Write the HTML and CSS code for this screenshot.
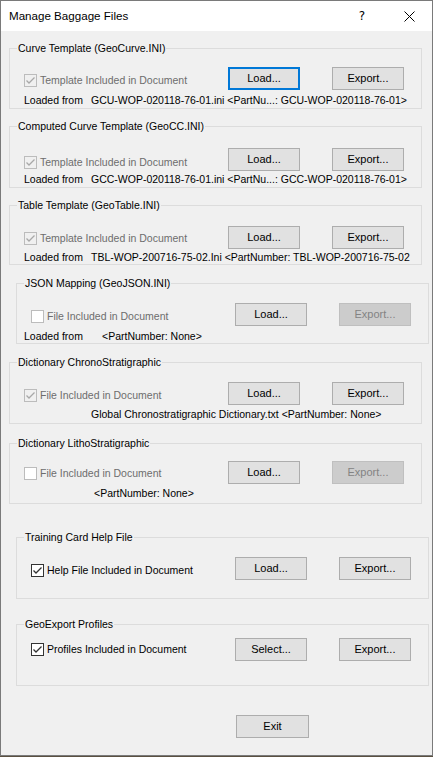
FILE: index.html
```html
<!DOCTYPE html>
<html>
<head>
<meta charset="utf-8">
<link rel="stylesheet" href="styles.css">
</head>
<body>
<div class="window">
  <div class="titlebar">
    <span class="title">Manage Baggage Files</span>
    <span class="tb-btn help">?</span>
    <span class="tb-btn close"><svg width="11" height="11" viewBox="0 0 11 11"><path d="M0.5 0.5 L10.5 10.5 M10.5 0.5 L0.5 10.5" stroke="#000" stroke-width="1" fill="none"/></svg></span>
  </div>

  <fieldset class="group g1">
    <legend>Curve Template (GeoCurve.INI)</legend>
    <div class="inner">
      <div class="row">
        <label class="check disabled"><span class="box checked"><svg viewBox="0 0 13 13"><polyline points="2.5,6.5 5,9 10.5,3.5"/></svg></span><span>Template Included in Document</span></label>
        <button class="btn focus">Load...</button>
        <button class="btn">Export...</button>
      </div>
      <div class="loaded"><span class="lf">Loaded from</span><span>GCU-WOP-020118-76-01.ini &lt;PartNu...: GCU-WOP-020118-76-01&gt;</span></div>
    </div>
  </fieldset>

  <fieldset class="group g2">
    <legend>Computed Curve Template (GeoCC.INI)</legend>
    <div class="inner">
      <div class="row">
        <label class="check disabled"><span class="box checked"><svg viewBox="0 0 13 13"><polyline points="2.5,6.5 5,9 10.5,3.5"/></svg></span><span>Template Included in Document</span></label>
        <button class="btn">Load...</button>
        <button class="btn">Export...</button>
      </div>
      <div class="loaded"><span class="lf">Loaded from</span><span>GCC-WOP-020118-76-01.ini &lt;PartNu...: GCC-WOP-020118-76-01&gt;</span></div>
    </div>
  </fieldset>

  <fieldset class="group g3">
    <legend>Table Template (GeoTable.INI)</legend>
    <div class="inner">
      <div class="row">
        <label class="check disabled"><span class="box checked"><svg viewBox="0 0 13 13"><polyline points="2.5,6.5 5,9 10.5,3.5"/></svg></span><span>Template Included in Document</span></label>
        <button class="btn">Load...</button>
        <button class="btn">Export...</button>
      </div>
      <div class="loaded clip"><span class="lf">Loaded from</span><span>TBL-WOP-200716-75-02.Ini &lt;PartNumber: TBL-WOP-200716-75-02</span></div>
    </div>
  </fieldset>

  <fieldset class="group g4 inset">
    <legend>JSON Mapping (GeoJSON.INI)</legend>
    <div class="inner">
      <div class="row">
        <label class="check disabled"><span class="box"></span><span>File Included in Document</span></label>
        <button class="btn">Load...</button>
        <button class="btn" disabled>Export...</button>
      </div>
      <div class="loaded"><span class="lf">Loaded from</span><span class="v4">&lt;PartNumber: None&gt;</span></div>
    </div>
  </fieldset>

  <fieldset class="group g5">
    <legend>Dictionary ChronoStratigraphic</legend>
    <div class="inner">
      <div class="row">
        <label class="check disabled"><span class="box checked"><svg viewBox="0 0 13 13"><polyline points="2.5,6.5 5,9 10.5,3.5"/></svg></span><span>File Included in Document</span></label>
        <button class="btn">Load...</button>
        <button class="btn">Export...</button>
      </div>
      <div class="loaded"><span class="lf"></span><span>Global Chronostratigraphic Dictionary.txt &lt;PartNumber: None&gt;</span></div>
    </div>
  </fieldset>

  <fieldset class="group g6">
    <legend>Dictionary LithoStratigraphic</legend>
    <div class="inner">
      <div class="row">
        <label class="check disabled"><span class="box"></span><span>File Included in Document</span></label>
        <button class="btn">Load...</button>
        <button class="btn" disabled>Export...</button>
      </div>
      <div class="loaded"><span class="lf"></span><span class="v6">&lt;PartNumber: None&gt;</span></div>
    </div>
  </fieldset>

  <fieldset class="group g7 inset">
    <legend>Training Card Help File</legend>
    <div class="inner">
      <div class="row">
        <label class="check"><span class="box checked"><svg viewBox="0 0 13 13"><polyline points="2.5,6.5 5,9 10.5,3.5"/></svg></span><span>Help File Included in Document</span></label>
        <button class="btn">Load...</button>
        <button class="btn">Export...</button>
      </div>
    </div>
  </fieldset>

  <fieldset class="group g8 inset">
    <legend>GeoExport Profiles</legend>
    <div class="inner">
      <div class="row">
        <label class="check"><span class="box checked"><svg viewBox="0 0 13 13"><polyline points="2.5,6.5 5,9 10.5,3.5"/></svg></span><span>Profiles Included in Document</span></label>
        <button class="btn">Select...</button>
        <button class="btn">Export...</button>
      </div>
    </div>
  </fieldset>

  <div class="footer">
    <button class="btn exit">Exit</button>
  </div>
</div>
</body>
</html>
```

FILE: styles.css
```css
html, body {
  margin: 0;
  padding: 0;
  background: #5a5040;
}

.window {
  width: 433px;
  height: 756px;
  box-sizing: border-box;
  border: 1px solid #7a7a7a;
  background: #f0f0f0;
  font: 10.5px/13px "Liberation Sans", Arial, sans-serif;
  color: #000;
  display: flex;
  flex-direction: column;
  overflow: hidden;
}

.titlebar {
  height: 30px;
  flex: none;
  background: #fff;
  display: flex;
  align-items: center;
}

.title {
  flex: 1;
  padding-left: 8px;
  font-size: 11.6px;
  line-height: 16px;
}

.tb-btn {
  width: 46px;
  height: 30px;
  display: flex;
  align-items: center;
  justify-content: center;
}

.help {
  font-family: "DejaVu Sans", "Liberation Sans", sans-serif;
  font-size: 12px;
  padding-right: 1px;
}

.close svg {
  display: block;
}

/* group boxes */
.group {
  margin: 11px 10px 0 8px;
  padding: 0;
  border: 1px solid #dcdcdc;
  min-width: 0;
  flex: none;
}

.group.inset {
  margin-left: 15px;
  margin-right: 3px;
}

.group legend {
  margin-left: 7px;
  padding: 0 1px;
  line-height: 13px;
}

.inner {
  padding: 13px 0 1px 14px;
}

.row {
  display: grid;
  grid-template-columns: 172px 72px 72px;
  column-gap: 32px;
  align-items: start;
}

.check {
  display: flex;
  align-items: center;
  gap: 3px;
  margin-top: 7px;
  height: 13px;
  white-space: nowrap;
}

.check.disabled {
  color: #6d6d6d;
}

.box {
  width: 13px;
  height: 13px;
  box-sizing: border-box;
  border: 1px solid #333;
  background: #fff;
  position: relative;
  flex: none;
}

.box svg {
  position: absolute;
  left: -1px;
  top: -1px;
  width: 13px;
  height: 13px;
}

.box polyline {
  fill: none;
  stroke: #333;
  stroke-width: 1.3;
}

.disabled .box {
  border-color: #bcbcbc;
  background: #fff;
}

.disabled .box.checked {
  background: #f0f0f0;
}

.disabled .box polyline {
  stroke: #a8a8a8;
}

.btn {
  height: 23px;
  box-sizing: border-box;
  border: 1px solid #adadad;
  background: #e1e1e1;
  font: inherit;
  font-size: 11px;
  color: #000;
  padding: 0;
  margin: 0;
  text-align: center;
}

.btn.focus {
  border: 2px solid #0078d7;
}

.btn:disabled {
  background: #cccccc;
  border-color: #bfbfbf;
  color: #838383;
}

.loaded {
  margin-top: 3px;
  white-space: nowrap;
}

.loaded.clip {
  width: 390px;
  overflow: hidden;
}

.lf {
  display: inline-block;
  width: 67px;
}

.v4 {
  padding-left: 11px;
}

.v6 {
  padding-left: 3px;
}

/* per-group spacing */
.g1 .inner { padding-top: 12px; }
.g1 .loaded { margin-top: 4px; }

.g2 { margin-top: 11px; }
.g2 .inner { padding-top: 15px; }
.g2 .check { margin-top: 8px; }
.g2 .loaded { margin-top: 2px; }

.g3 .inner { padding-top: 14px; padding-bottom: 0; }
.g3 .check { margin-top: 6px; }
.g3 .loaded { margin-top: 2px; }

.g4 { margin-top: 12px; }
.g4 .inner { padding-bottom: 0; }
.g4 .loaded { margin-top: 4px; margin-left: -7px; }

.g5 { margin-top: 12px; }
.g5 .inner { padding-bottom: 2px; }

.g6 { margin-top: 13px; }
.g6 .inner { padding-top: 11px; padding-bottom: 3px; }
.g6 .check { margin-top: 6px; }

.g7 { margin-top: 27px; }
.g7 .inner { padding-bottom: 18px; }

.g8 { margin-top: 19px; }
.g8 .inner { padding-top: 7px; padding-bottom: 24px; }
.g8 .check { margin-top: 5px; }

.footer {
  padding: 29px 0 0 235px;
}

.exit {
  width: 73px;
}
```
